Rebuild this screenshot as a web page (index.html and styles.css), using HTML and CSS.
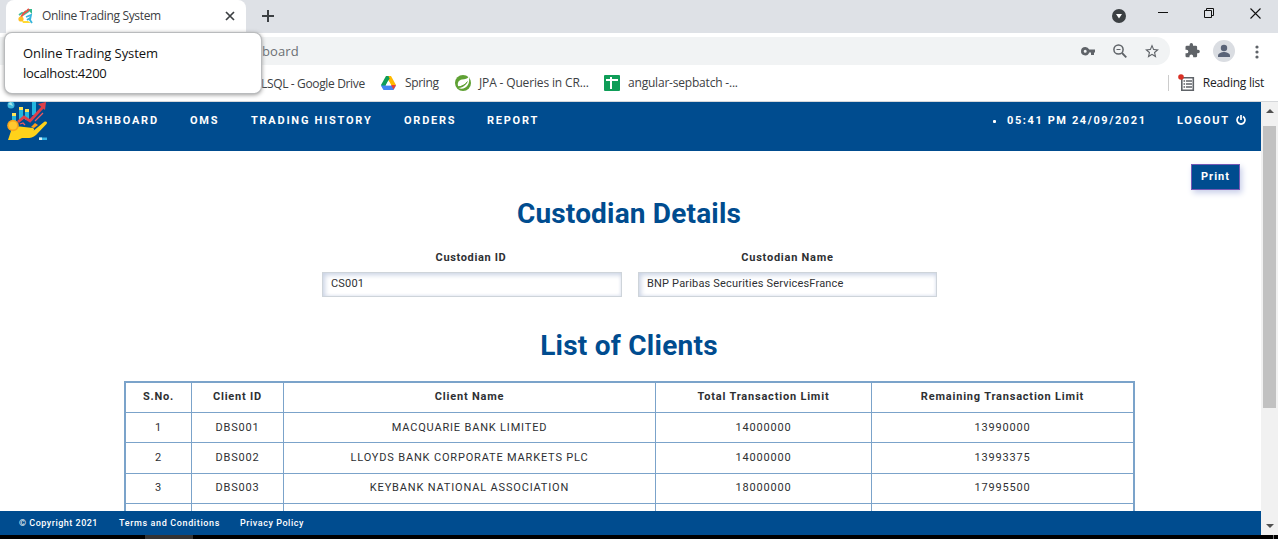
FILE: index.html
```html
<!DOCTYPE html>
<html lang="en">
<head>
<meta charset="utf-8">
<title>Online Trading System</title>
<link rel="stylesheet" href="styles.css">
</head>
<body>
<div class="window">
  <div class="tabstrip">
    <div class="tab">
      <svg class="favicon" width="16" height="16" viewBox="0 0 16 16"><path d="M1 7l3-2 1 1 3-3M5 7l6-4" fill="none" stroke="#43bd9b" stroke-width="1.800"/><path d="M9 1h5v5z" fill="#35b98d"/><path d="M3 9l3-4 3-2 2-2" fill="none" stroke="#ee5045" stroke-width="2"/><circle cx="3" cy="11" r="2.600" fill="#ffbf25"/><path d="M4 13h6l3 2H5z" fill="#ffda35"/><path d="M8 9l5-2-1 5 2 3M9 12l3-2" fill="none" stroke="#36b5df" stroke-width="1.800"/></svg>
      <span class="tab-title">Online Trading System</span>
      <svg class="tab-close" width="10" height="10" viewBox="0 0 10 10"><path d="M1 1l8 8M9 1L1 9" stroke="#3c4043" stroke-width="1.7"/></svg>
    </div>
    <svg class="new-tab" width="14" height="14" viewBox="0 0 14 14"><path d="M7 1v12M1 7h12" stroke="#3c4043" stroke-width="2"/></svg>
    <div class="window-controls">
      <svg width="14" height="14" viewBox="0 0 14 14"><circle cx="7" cy="7" r="7" fill="#3c4043"/><path d="M4 5h6l-3 4.5z" fill="#fff"/></svg>
      <svg width="10" height="10" viewBox="0 0 10 10"><path d="M0 4.500h10" stroke="#111"/></svg>
      <svg width="10" height="10" viewBox="0 0 10 10" fill="none" stroke="#111"><path d="M.5 2.500h7v7h-7zM2.500 2.500v-2h7v7h-2"/></svg>
      <svg width="11" height="11" viewBox="0 0 11 11"><path d="M.5.5l10 10M10.500.5l-10 10" stroke="#111" stroke-width="1.100"/></svg>
    </div>
  </div>

  <div class="toolbar">
    <div class="omnibox">
      <span class="url">board</span>
      <div class="omni-icons">
        <svg width="14" height="9" viewBox="0 0 14 9"><path fill="#5f6368" fill-rule="evenodd" d="M4.200 0a4.200 4.200 0 1 0 4 5.500H10V8h3V5.500h1v-3H8.200A4.200 4.200 0 0 0 4.200 0zm0 2.700a1.500 1.500 0 1 1 0 3 1.500 1.500 0 0 1 0-3z"/></svg>
        <svg width="14" height="14" viewBox="0 0 14 14" fill="none" stroke="#5f6368"><circle cx="5.500" cy="5.500" r="4.600" stroke-width="1.500"/><path d="M9 9l4.300 4.300" stroke-width="1.800"/><path d="M3.500 5.500h4"/></svg>
        <svg width="14" height="14" viewBox="0 0 24 24"><path fill="#5f6368" d="M24 9.240l-8.630-.74L12 .5 8.630 8.500 0 9.240l6.550 5.680L4.590 23.500 12 18.900l7.410 4.600-1.960-8.580zM12 16.500l-4.500 2.700 1.200-5.100-4-3.500 5.200-.4L12 5.300l2.100 4.900 5.200.4-4 3.500 1.200 5.100z"/></svg>
      </div>
    </div>
    <svg class="puzzle" width="15" height="15" viewBox="1.500 1 21.500 22"><path fill="#5f6368" d="M20.500 11H19V7a2 2 0 0 0-2-2h-4V3.500a2.500 2.500 0 0 0-5 0V5H4a2 2 0 0 0-2 2v3.800h1.500a2.700 2.700 0 0 1 0 5.400H2V20a2 2 0 0 0 2 2h3.800v-1.500a2.700 2.700 0 0 1 5.400 0V22H17a2 2 0 0 0 2-2v-4h1.500a2.500 2.500 0 0 0 0-5z"/></svg>
    <svg class="avatar" width="22" height="22" viewBox="0 0 22 22"><circle cx="11" cy="11" r="11" fill="#dadde2"/><circle cx="11" cy="8" r="3.200" fill="#5a6478"/><path d="M5 17v-1.500c0-2.300 3.800-3.500 6-3.500s6 1.200 6 3.500V17z" fill="#5a6478"/></svg>
    <svg class="kebab" width="4" height="14" viewBox="0 0 4 14" fill="#5f6368"><circle cx="2" cy="2" r="1.600"/><circle cx="2" cy="7" r="1.600"/><circle cx="2" cy="12" r="1.600"/></svg>
  </div>

  <div class="bookmarks">
    <span class="bm bm-sql">LSQL - Google Drive</span>
    <span class="bm bm-spring"><svg width="15" height="14" viewBox="0 0 15 14"><path fill="#ffba00" d="M5 0h5l5 9h-5z"/><path fill="#0f9d58" d="M5 0h2.500l1 2.500-6 11L0 9z"/><path fill="#4285f4" d="M0 9.500l2.500 4.500h10L15 9.500z"/><path fill="#ea4335" d="M10 9h5l-2.500 4.500z"/><path fill="#fff" d="M7.500 4.500l2.700 4.800H4.800z"/></svg><span>Spring</span></span>
    <span class="bm bm-jpa"><svg width="16" height="16" viewBox="0 0 16 16"><circle cx="8" cy="8" r="8" fill="#5fa134"/><path fill="#fff" d="M13.800 1.500C12.500 4 10 4 7 4.500 3.500 5.200 2 8 3.200 11.300 6 11.500 10 9.500 12.500 7 11 10.500 7 12.700 3.500 13c6 2.600 12.500-3 10.300-11.500z"/><path d="M3 12.300C6.500 12 10.500 9.500 12.500 6.500" fill="none" stroke="#5fa134"/></svg><span>JPA - Queries in CR...</span></span>
    <span class="bm bm-ang"><svg width="16" height="16" viewBox="0 0 16 16"><rect width="16" height="16" rx="1" fill="#0f9d58"/><path d="M2 5h12M7 2v12" stroke="#fff" stroke-width="2"/></svg><span>angular-sepbatch -...</span></span>
    <span class="reading"><svg width="17" height="18" viewBox="0 0 17 18"><path d="M3.800 3.800h11.500v12.500H3.800z" fill="#fff" stroke="#5f6368" stroke-width="1.600"/><path d="M5.500 7h1.600M5.500 10h1.600M5.500 13h1.600M8 7h6M8 10h6M8 13h6" stroke="#5f6368" stroke-width="1.300"/><circle cx="3" cy="3" r="2.800" fill="#d93025"/></svg><span>Reading list</span></span>
  </div>

  <div class="viewport">
    <div class="page">
      <header class="nav">
        <svg class="logo" width="40" height="38" viewBox="0 2 40 38">
          <circle cx="4" cy="5" r="3.500" fill="#3fb8dc"/><path d="M1 4l3-2 2 4" fill="#a5e6ea"/>
          <path fill="#24b6df" d="M5 15h4v8H5zM12 10h4v10h-4zM18 12h4v8h-4zM25 2h4v13h-4z"/>
          <path fill="#fee45a" d="M5 13h4v3H5zM12 7h4v3h-4zM18 9h4v3h-4z"/>
          <path d="M11 22l6-5 6 4L36 7" fill="none" stroke="#df3f49" stroke-width="2.800"/><path d="M31 4l8-2-1 8z" fill="#df3f49"/>
          <path d="M13 24l3-1 2 2M28 21l8-8" fill="none" stroke="#ed5a62" stroke-width="1.300"/>
          <path fill="#ffd21a" d="M1 40l3-9c3-5 9-5 13-4l9 1c2 1 1 3-1 4l12-10c2-1 4 0 2.500 2L29 35c-4 4-9 3-14 3l-4 2z"/>
          <path d="M24 27l4-4 3 2-4 3z" fill="#ff9d18"/><circle cx="6" cy="25.500" r="5.800" fill="#f9a51b"/><circle cx="6" cy="25.500" r="4" fill="#ffc82f"/>
          <path d="M32 37.500h8V40h-8z" fill="#37b5e5"/><path d="M32 37.500h3V40h-3z" fill="#d7edf0"/>
        </svg>
        <nav class="links"><a class="l1">DASHBOARD</a><a class="l2">OMS</a><a class="l3">TRADING HISTORY</a><a class="l4">ORDERS</a><a class="l5">REPORT</a></nav>
        <i class="dot"></i>
        <span class="clock">05:41 PM 24/09/2021</span>
        <span class="logout">LOGOUT</span>
        <svg class="power" width="10" height="10" viewBox="0 0 10 10" fill="none" stroke="#fff" stroke-width="1.700"><path d="M3 1.600a4 4 0 1 0 4 0M5 0v5"/></svg>
      </header>
      <main>
        <div class="actions"><button class="print">Print</button></div>
        <h1 class="h-cust">Custodian Details</h1>
        <div class="fields">
          <div class="field"><label class="lb1">Custodian ID</label><div class="input">CS001</div></div>
          <div class="field second"><label class="lb2">Custodian Name</label><div class="input">BNP Paribas Securities ServicesFrance</div></div>
        </div>
        <h1 class="h-list">List of Clients</h1>
        <div class="grid">
          <div class="row head"><b>S.No.</b><b>Client ID</b><b>Client Name</b><b>Total Transaction Limit</b><b>Remaining Transaction Limit</b></div>
          <div class="row"><span>1</span><span>DBS001</span><span>MACQUARIE BANK LIMITED</span><span>14000000</span><span>13990000</span></div>
          <div class="row tall"><span>2</span><span>DBS002</span><span>LLOYDS BANK CORPORATE MARKETS PLC</span><span>14000000</span><span>13993375</span></div>
          <div class="row high"><span>3</span><span>DBS003</span><span>KEYBANK NATIONAL ASSOCIATION</span><span>18000000</span><span>17995500</span></div>
          <div class="row"><span></span><span></span><span></span><span></span><span></span></div>
        </div>
      </main>
      <footer class="foot"><span class="f1">© Copyright 2021</span><span class="f2">Terms and Conditions</span><span class="f3">Privacy Policy</span></footer>
    </div>
    <div class="scrollbar">
      <svg width="8" height="4" viewBox="0 0 8 4"><path d="M4 0l4 4H0z" fill="#505050"/></svg>
      <div class="thumb"></div>
      <svg class="down" width="8" height="4" viewBox="0 0 8 4"><path d="M0 0h8L4 4z" fill="#505050"/></svg>
    </div>
  </div>
  <div class="taskbar"><div class="task"></div><div class="edge"></div></div>

  <div class="tooltip"><span class="tt1">Online Trading System</span><span class="tt2">localhost:4200</span></div>
</div>
</body>
</html>
```
FILE: styles.css
```css
* { box-sizing: border-box; }
body { margin: 0; background: #fff; }
svg { display: block; flex: none; overflow: visible; }
.window {
  position: relative; width: 1278px; height: 539px; overflow: hidden;
  display: flex; flex-direction: column;
  font-family: "Open Sans", sans-serif; font-size: 12px; color: #3c4043; white-space: nowrap;
}

/* browser chrome */
.tabstrip { height: 33px; background: #dee1e6; display: flex; align-items: center; padding-left: 6px; }
.tab { width: 240px; height: 33px; background: #fff; border-radius: 8px 8px 0 0; display: flex; align-items: center; padding-left: 12px; }
.tab-title { margin-left: 8px; width: 184px; letter-spacing: -.34px; line-height: 32px; margin-top: -2px; }
.favicon { margin-top: -1px; }
.tab-close { margin-left: -1px; margin-top: -1px; }
.new-tab { margin-left: 15px; margin-top: -2px; }
.window-controls { margin-left: auto; display: flex; align-items: center; gap: 36px; padding-right: 17px; margin-top: -7px; }
.window-controls svg:first-child { margin-top: 6px; margin-right: -4px; }
.toolbar { height: 36px; display: flex; align-items: center; padding-bottom: 3px; padding-top: 1px; }
.omnibox { width: 1170px; height: 28px; border-radius: 0 14px 14px 0; background: #f1f3f4; display: flex; align-items: center; padding-left: 262px; padding-right: 11px; margin-top: 2px; }
.url { font-size: 13px; color: #6b6f73; letter-spacing: .1px; }
.omni-icons { margin-left: auto; display: flex; gap: 18px; align-items: center; }
.puzzle { margin-left: 15px; margin-top: 1px; }
.avatar { margin-left: 13px; margin-top: 2px; }
.kebab { margin-left: 20px; margin-top: 3px; }
.bookmarks { height: 33px; border-bottom: 1px solid #d5d7da; display: flex; align-items: center; padding: 0 14px 4px 261px; }
.bm { display: flex; align-items: center; gap: 8px; }
.bm > span, .reading > span { margin-top: -1px; }
.bm-sql { width: 120px; letter-spacing: -.35px; }
.bm-spring { width: 74px; letter-spacing: -.35px; gap: 9px; }
.bm-jpa { width: 149px; letter-spacing: -.15px; }
.bm-ang { letter-spacing: -.2px; }
.reading { margin-left: auto; height: 16px; border-left: 1px solid #ccc; padding-left: 9px; display: flex; align-items: center; gap: 8px; color: #202124; letter-spacing: -.25px; }
.tooltip {
  position: absolute; left: 5px; top: 33px; width: 256px; height: 60px; background: #fff;
  border-radius: 7px; box-shadow: 0 0 0 1px #b9bbbd, 0 1px 4px 1px #999;
  display: flex; flex-direction: column; padding: 10px 18px; line-height: 20px; font-size: 13px; color: #111;
}
.tt1 { letter-spacing: -.07px; }
.tt2 { letter-spacing: -.3px; }

/* page */
.viewport { height: 433px; display: flex; }
.page { width: 1261px; display: flex; flex-direction: column; font-family: Roboto, sans-serif; font-size: 11px; color: #2e3033; overflow: hidden; }
.nav { height: 49px; flex: none; background: #004c8f; color: #fff; display: flex; font-weight: 700; line-height: 38px; }
.logo { margin-left: 7px; }
.links { display: flex; margin-left: 31px; }
.links a { letter-spacing: 1.75px; }
.l1 { width: 112px; }
.l2 { width: 61px; }
.l3 { width: 153px; }
.l4 { width: 83px; }
.dot { width: 3px; height: 3px; background: #fff; border-radius: 1px; margin: 18px 0 0 auto; }
.clock { width: 170px; margin-left: 11px; letter-spacing: 1.6px; }
.logout { width: 59px; letter-spacing: 1.75px; }
.power { margin: 13px 15px 0 0; }
main { height: 360px; flex: none; overflow: hidden; display: flex; flex-direction: column; align-items: center; }
.actions { align-self: flex-end; padding: 13px 21px 0 0; }
.print { display: block; width: 49px; height: 26px; padding: 0 0 2px; border: 1px solid #7458b4; background: #004c8f; color: #fff; font: 700 11px Roboto, sans-serif; letter-spacing: 1px; box-shadow: 2px 3px 6px #c9cfea; }
h1 { margin: 0; color: #004c8f; font-size: 28px; line-height: 34px; font-weight: 700; }
.h-cust { margin-top: 7px; margin-right: 3px; letter-spacing: .18px; }
.h-list { margin-top: 32px; margin-right: 3px; letter-spacing: .25px; }
.fields { display: flex; gap: 16px; margin-top: 19px; margin-right: 2px; }
.field { width: 300px; display: flex; flex-direction: column; align-items: center; }
.field.second { width: 299px; }
.field label { font-weight: 700; line-height: 15px; margin-bottom: 7px; letter-spacing: .75px; }
.field .lb1 { margin-right: 2px; letter-spacing: .65px; }
.input { width: 100%; height: 25px; border: 1px solid #ced4da; box-shadow: inset 2px 2px 5px #c9d2e4, inset -1px -1px 3px #edf0f7; padding-left: 8px; line-height: 21px; letter-spacing: .18px; }
.grid { width: 1011px; margin-top: 18px; margin-right: 2px; border: 2px solid #7ba3ca; border-bottom: 0; letter-spacing: .83px; }
.row { display: grid; grid-template-columns: 65px 92px 372px 216px 262px; height: 30px; line-height: 29px; text-align: center; border-bottom: 1px solid #7ba3ca; }
.row.head { line-height: 27px; letter-spacing: .8px; }
.row.tall { height: 31px; }
.row.high { line-height: 27px; }
.row > * + * { border-left: 1px solid #7ba3ca; }
.foot { height: 24px; flex: none; background: #004c8f; color: #fff; display: flex; padding-left: 19px; font-size: 9px; line-height: 24px; font-weight: 500; }
.f1 { width: 100px; letter-spacing: .5px; }
.f2 { width: 121px; letter-spacing: .63px; }
.f3 { letter-spacing: .55px; }
.scrollbar { width: 17px; background: #f1f1f1; display: flex; flex-direction: column; align-items: center; padding: 7px 0; }
.thumb { width: 13px; height: 282px; margin-top: 13px; background: #c1c1c1; }
.down { margin-top: auto; }
.taskbar { height: 4px; background: #000; display: flex; padding-left: 145px; }
.task { width: 48px; background: #333; }
.edge { width: 1px; margin-left: auto; margin-right: 4px; background: #777; }
```
